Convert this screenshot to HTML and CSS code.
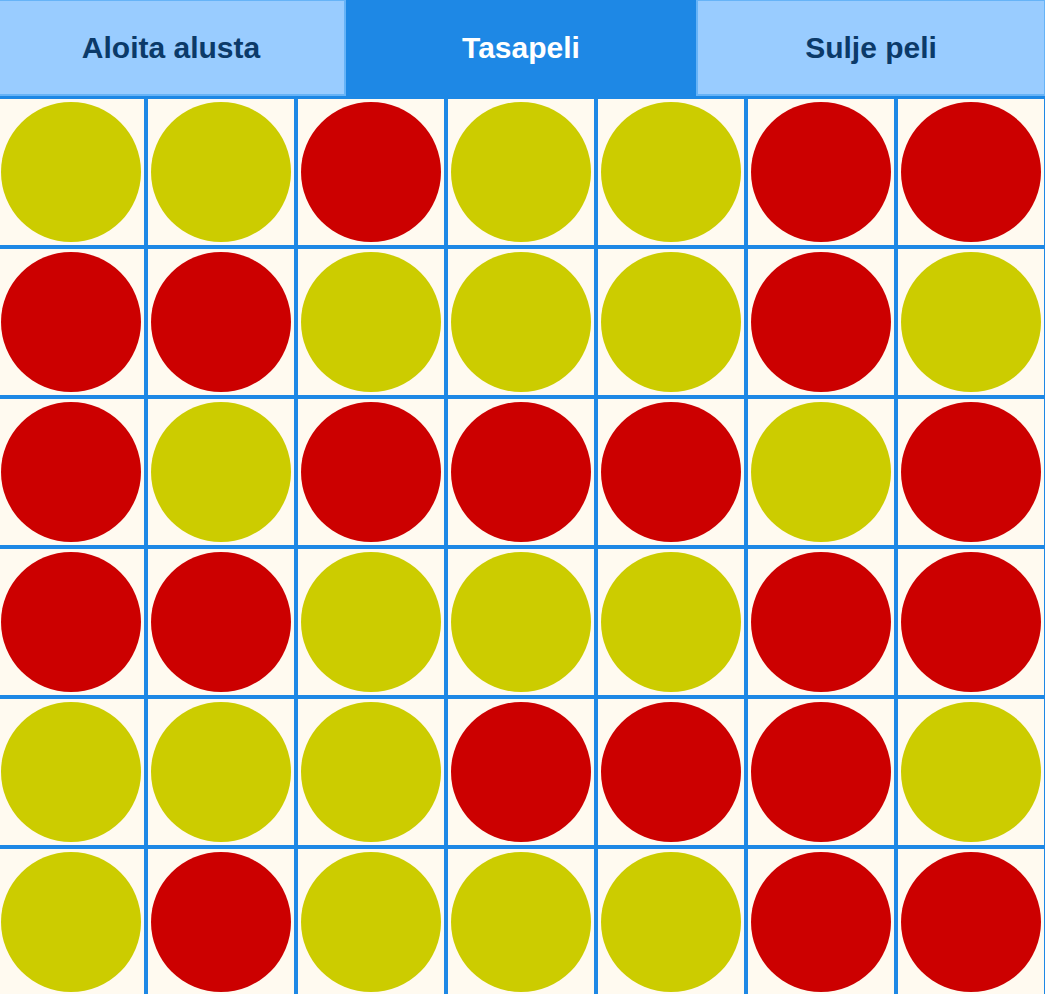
FILE: index.html
```html
<!DOCTYPE html>
<html lang="fi">
<head>
<meta charset="utf-8">
<title>Neljän suora</title>
<link rel="stylesheet" href="styles.css">
</head>
<body>
<div class="app">
  <header class="bar">
    <button class="btn">Aloita alusta</button>
    <button class="btn active">Tasapeli</button>
    <button class="btn">Sulje peli</button>
  </header>
  <main class="board">
    <div class="cell"><span class="disc y"></span></div>
    <div class="cell"><span class="disc y"></span></div>
    <div class="cell"><span class="disc r"></span></div>
    <div class="cell"><span class="disc y"></span></div>
    <div class="cell"><span class="disc y"></span></div>
    <div class="cell"><span class="disc r"></span></div>
    <div class="cell"><span class="disc r"></span></div>

    <div class="cell"><span class="disc r"></span></div>
    <div class="cell"><span class="disc r"></span></div>
    <div class="cell"><span class="disc y"></span></div>
    <div class="cell"><span class="disc y"></span></div>
    <div class="cell"><span class="disc y"></span></div>
    <div class="cell"><span class="disc r"></span></div>
    <div class="cell"><span class="disc y"></span></div>

    <div class="cell"><span class="disc r"></span></div>
    <div class="cell"><span class="disc y"></span></div>
    <div class="cell"><span class="disc r"></span></div>
    <div class="cell"><span class="disc r"></span></div>
    <div class="cell"><span class="disc r"></span></div>
    <div class="cell"><span class="disc y"></span></div>
    <div class="cell"><span class="disc r"></span></div>

    <div class="cell"><span class="disc r"></span></div>
    <div class="cell"><span class="disc r"></span></div>
    <div class="cell"><span class="disc y"></span></div>
    <div class="cell"><span class="disc y"></span></div>
    <div class="cell"><span class="disc y"></span></div>
    <div class="cell"><span class="disc r"></span></div>
    <div class="cell"><span class="disc r"></span></div>

    <div class="cell"><span class="disc y"></span></div>
    <div class="cell"><span class="disc y"></span></div>
    <div class="cell"><span class="disc y"></span></div>
    <div class="cell"><span class="disc r"></span></div>
    <div class="cell"><span class="disc r"></span></div>
    <div class="cell"><span class="disc r"></span></div>
    <div class="cell"><span class="disc y"></span></div>

    <div class="cell"><span class="disc y"></span></div>
    <div class="cell"><span class="disc r"></span></div>
    <div class="cell"><span class="disc y"></span></div>
    <div class="cell"><span class="disc y"></span></div>
    <div class="cell"><span class="disc y"></span></div>
    <div class="cell"><span class="disc r"></span></div>
    <div class="cell"><span class="disc r"></span></div>
  </main>
</div>
</body>
</html>
```

FILE: styles.css
```css
html, body {
  margin: 0;
  padding: 0;
  background: #1e88e5;
  overflow: hidden;
}

.app {
  width: 1050px;
  margin-left: -4px;
  font-family: "Liberation Sans", Arial, sans-serif;
}

.bar {
  display: grid;
  grid-template-columns: 350px 346px 350px;
  column-gap: 2px;
  height: 97px;
  background: #1e88e5;
}

.btn {
  height: 96px;
  margin: 0;
  padding: 0;
  border: 2px solid #66b3f7;
  border-top-width: 1px;
  background: #99ccff;
  color: #0b3a69;
  font-family: "Liberation Sans", Arial, sans-serif;
  font-size: 30px;
  font-weight: bold;
  cursor: pointer;
}

.btn.active {
  background: #1e88e5;
  border-color: #1e88e5;
  color: #ffffff;
}

.board {
  display: grid;
  grid-template-columns: repeat(7, 150px);
  grid-auto-rows: 150px;
}

.cell {
  box-sizing: border-box;
  border: 2px solid #1e88e5;
  background: #fffaf0;
  display: flex;
  align-items: center;
  justify-content: center;
}

.disc {
  width: 140px;
  height: 140px;
  border-radius: 50%;
}

.disc.r { background: #cc0000; }
.disc.y { background: #cccc00; }
```
